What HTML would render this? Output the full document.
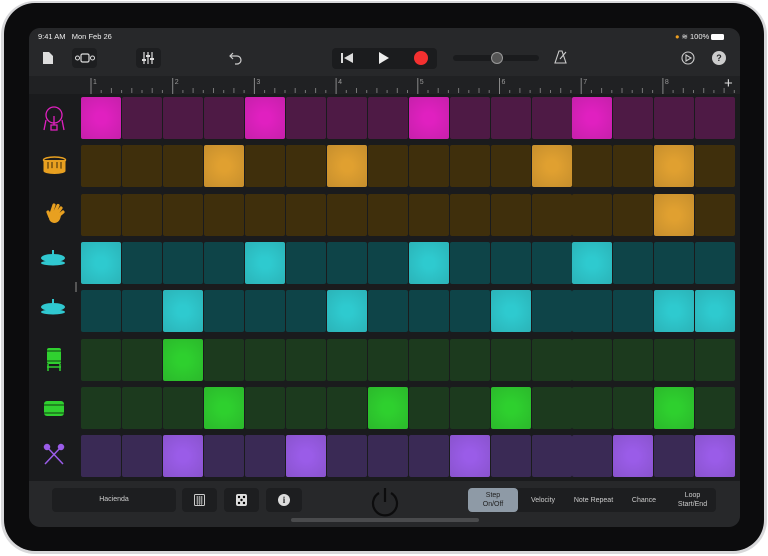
<!DOCTYPE html>
<html><head><style>
*{margin:0;padding:0;box-sizing:border-box}
body{width:768px;height:556px;background:#fff;position:relative;overflow:hidden;font-family:"Liberation Sans",sans-serif}
.outer{position:absolute;left:1px;top:1px;width:766px;height:553px;border-radius:34px;background:#d8d8da}
.bez{position:absolute;left:4px;top:3px;width:760px;height:548px;border-radius:31px;background:#0c0c0d}
.scr{position:absolute;left:29px;top:28px;width:711px;height:499px;border-radius:11px;background:#1a1b1d;overflow:hidden}
.tb{position:absolute;left:0;top:0;width:711px;height:48px;background:#27282a}
.st{position:absolute;top:4px;font-size:7.5px;color:#eee}
.rul{position:absolute;left:0;top:48px;width:711px;height:18px;background:#202123}
.left{position:absolute;left:0;top:66px;width:50px;height:387px;background:#1a1b1d}
.cell{position:absolute;width:40px;height:42px;border-radius:2px}
.bot{position:absolute;left:0;top:453px;width:711px;height:46px;background:#27282a}
.btn{position:absolute;background:#1d1e20;border-radius:4px;color:#ccc;font-size:7px;text-align:center}
.seg{position:absolute;top:7px;height:24px;font-size:7px;color:#ccc;text-align:center;display:flex;align-items:center;justify-content:center;line-height:9px}
.ico{position:absolute}
</style></head><body>
<div class="outer"></div><div class="bez"></div>
<div class="scr">
<div class="tb">
<div class="st" style="left:9px">9:41 AM&nbsp;&nbsp;&nbsp;Mon Feb 26</div>
<div class="st" style="left:646px"><span style="color:#f0a020">●</span> ≋ 100% <span style="display:inline-block;width:13px;height:6px;background:#fff;border-radius:1.5px;vertical-align:middle"></span></div>
<svg class="ico" style="left:13px;top:23px" width="12" height="14"><path d="M1 1h6l4 4v8H1z" fill="#ddd"/></svg>
<div class="btn" style="left:43px;top:20px;width:25px;height:20px"></div>
<svg class="ico" style="left:45px;top:25px" width="22" height="10"><rect x="7" y="1" width="8" height="8" rx="1.5" fill="none" stroke="#ddd" stroke-width="1.2"/><circle cx="3.5" cy="5" r="2" fill="none" stroke="#ddd"/><circle cx="18.5" cy="5" r="2" fill="none" stroke="#ddd"/></svg>
<div class="btn" style="left:107px;top:20px;width:25px;height:20px"></div>
<svg class="ico" style="left:113px;top:23px" width="14" height="14" stroke="#ddd" stroke-width="1.2"><path d="M2 1v12M6 1v12M10 1v12"/><path d="M0 9h4M4 5h4M8 8h4" stroke-width="2"/></svg>
<svg class="ico" style="left:200px;top:23px" width="14" height="14" fill="none" stroke="#ccc" stroke-width="1.2"><path d="M4 2L1 5l3 3M1 5h7a4 4 0 0 1 0 8H6"/></svg>
<div class="btn" style="left:303px;top:20px;width:105px;height:21px;background:#1b1c1e"></div>
<svg class="ico" style="left:311px;top:24px" width="14" height="12"><rect x="1" y="1" width="2" height="10" fill="#ddd"/><path d="M13 1v10L4 6z" fill="#ddd"/></svg>
<svg class="ico" style="left:349px;top:24px" width="12" height="12"><path d="M1 0v12l10-6z" fill="#eee"/></svg>
<div style="position:absolute;left:385px;top:23px;width:14px;height:14px;border-radius:7px;background:#f43030"></div>
<div style="position:absolute;left:424px;top:27px;width:86px;height:6px;border-radius:3px;background:#1a1b1d"></div>
<div style="position:absolute;left:462px;top:24px;width:12px;height:12px;border-radius:6px;background:#555;border:1px solid #999"></div>
<svg class="ico" style="left:525px;top:22px" width="14" height="15" fill="none" stroke="#ccc" stroke-width="1.1"><path d="M5 1h3l4 12H1zM1 13h11M6 9l6-7"/></svg>
<svg class="ico" style="left:652px;top:23px" width="14" height="14" fill="none" stroke="#ccc" stroke-width="1.1"><circle cx="7" cy="7" r="6"/><path d="M5 4v6l5-3z"/></svg>
<div style="position:absolute;left:683px;top:23px;width:14px;height:14px;border-radius:7px;background:#ccc;color:#27282a;font-size:9px;font-weight:bold;text-align:center;line-height:14px">?</div>
</div>
<div class="rul">
<svg width="711" height="18" style="position:absolute;left:0;top:0" id="rsv"></svg>
<div style="position:absolute;left:695px;top:-1px;color:#ddd;font-size:15px">+</div>
</div>
<div class="left"></div>
<div id="grid"></div>
<svg class="ico" style="left:13px;top:78px" width="24" height="26" fill="none" stroke="#e020c0" stroke-width="1.3"><circle cx="12" cy="9" r="8"/><path d="M12 10v9M9 19h6v5H9zM4 14l-2 10M20 14l2 10"/></svg>
<svg class="ico" style="left:13px;top:128px" width="25" height="19"><ellipse cx="12.5" cy="4" rx="11" ry="3" fill="none" stroke="#e8a020" stroke-width="1.5"/><rect x="1.5" y="4" width="22" height="11" fill="#e8a020"/><path d="M6 6v8M10 6v8M15 6v8M19 6v8" stroke="#3a2808" stroke-width="1"/><ellipse cx="12.5" cy="15" rx="11" ry="3" fill="#e8a020"/></svg>
<svg class="ico" style="left:15px;top:174px" width="22" height="22"><g stroke="#e8a020" stroke-width="3.2" stroke-linecap="round"><path d="M7 12L10 3M10 12L14 3.5M12 13L17 6M13 15L19 10"/><path d="M4 10L6 15"/></g><path d="M5 13Q4 20 10 21Q16 21 17 13L9 10Z" fill="#e8a020"/></svg>
<svg class="ico" style="left:11px;top:222px" width="26" height="16" fill="#30c8d0"><rect x="12" y="0" width="2" height="6"/><ellipse cx="13" cy="8" rx="12" ry="4"/><ellipse cx="13" cy="13" rx="12" ry="2.5"/></svg>
<svg class="ico" style="left:11px;top:271px" width="26" height="16" fill="#30c8d0"><rect x="12" y="0" width="2" height="6"/><ellipse cx="13" cy="8" rx="12" ry="4"/><ellipse cx="13" cy="13" rx="12" ry="2.5"/></svg>
<svg class="ico" style="left:17px;top:318px" width="16" height="26"><rect x="1" y="2" width="14" height="16" rx="2" fill="#30d030"/><path d="M2 18v7M14 18v7M1 21h14" stroke="#30d030" stroke-width="1.5"/><path d="M1 5h14M1 15h14" stroke="#124012"/></svg>
<svg class="ico" style="left:14px;top:371px" width="22" height="19"><rect x="1" y="2" width="20" height="15" rx="3" fill="#30d030"/><path d="M1 6h20M1 14h20" stroke="#124012"/></svg>
<svg class="ico" style="left:13px;top:415px" width="24" height="22" stroke="#9a5ce8" stroke-width="1.5"><path d="M3 21L19 4M21 21L5 4"/><circle cx="19" cy="4" r="2.5" fill="#9a5ce8"/><circle cx="5" cy="4" r="2.5" fill="#9a5ce8"/></svg>
<div style="position:absolute;left:46px;top:254px;width:1.5px;height:10px;background:#555"></div>
<div class="bot">
<div class="btn" style="left:23px;top:7px;width:124px;height:24px;line-height:24px">Hacienda</div>
<div class="btn" style="left:153px;top:7px;width:35px;height:24px"></div>
<svg class="ico" style="left:165px;top:13px" width="11" height="12"><rect x=".5" y=".5" width="10" height="11" rx="1" fill="none" stroke="#ccc"/><path d="M2 3h7M2 5h7M2 7h7M2 9h7M3.5 2v9M5.5 2v9M7.5 2v9" stroke="#ccc" stroke-width=".6"/></svg>
<div class="btn" style="left:195px;top:7px;width:35px;height:24px"></div>
<svg class="ico" style="left:207px;top:13px" width="11" height="12"><rect x="0" y="0" width="11" height="12" rx="2" fill="#ddd"/><circle cx="3" cy="3" r="1.2"/><circle cx="8" cy="3" r="1.2"/><circle cx="5.5" cy="6" r="1.2"/><circle cx="3" cy="9" r="1.2"/><circle cx="8" cy="9" r="1.2"/></svg>
<div class="btn" style="left:237px;top:7px;width:36px;height:24px"></div>
<div style="position:absolute;left:249px;top:13px;width:12px;height:12px;border-radius:6px;background:#ddd;color:#27282a;font-size:9px;font-weight:bold;text-align:center;line-height:12px;font-family:'Liberation Serif',serif">i</div>
<svg class="ico" style="left:340px;top:5px" width="32" height="32" fill="none" stroke="#0c0c0d" stroke-width="2.2"><path d="M10 7A12 12 0 1 0 22 7"/><path d="M16 2v14"/></svg>
<div style="position:absolute;left:439px;top:7px;width:248px;height:24px;background:#1d1e20;border-radius:4px"></div>
<div class="seg" style="left:439px;width:50px;background:#8e9aa6;color:#222;border-radius:4px">Step<br>On/Off</div>
<div class="seg" style="left:489px;width:50px">Velocity</div>
<div class="seg" style="left:539px;width:51px">Note Repeat</div>
<div class="seg" style="left:590px;width:50px">Chance</div>
<div class="seg" style="left:640px;width:47px">Loop<br>Start/End</div>
<div style="position:absolute;left:262px;top:37px;width:188px;height:4px;border-radius:2px;background:#4a4b4d"></div>
</div>
</div>
<script>
var rows=[["#4e1a45","#e020c0",[0,4,8,12]],["#3f2f0c","#e0a030",[3,6,11,14]],["#3f2f0c","#e0a030",[14]],["#0e4448","#2ecacf",[0,4,8,12]],["#0e4448","#2ecacf",[2,6,10,14,15]],["#1c3a1e","#2ed02e",[2]],["#1c3a1e","#2ed02e",[3,7,10,14]],["#3a2a55","#9a5ce8",[2,5,9,13,15]]];
var gs=[52,216,380,543],h="";
rows.forEach(function(r,i){var y=69+i*48.3;for(var c=0;c<16;c++){var x=gs[c>>2]+(c%4)*41;var on=r[2].indexOf(c)>=0;
h+='<div class="cell" style="left:'+x+'px;top:'+y+'px;background:'+(on?'radial-gradient(circle,'+r[1]+' 20%,'+r[1]+'dd 100%)':r[0])+'"></div>';}});
document.getElementById('grid').innerHTML=h;
var s="";for(var b=0;b<8;b++){var x=62+b*81.7;s+='<line x1="'+x+'" y1="2" x2="'+x+'" y2="18" stroke="#888"/><text x="'+(x+2)+'" y="8" font-size="7" fill="#999" font-family="Liberation Sans">'+(b+1)+'</text>';for(var t=1;t<8;t++){var tx=x+t*10.2;s+='<line x1="'+tx+'" y1="'+(t%2?14:12)+'" x2="'+tx+'" y2="17" stroke="#777"/>';}}
document.getElementById('rsv').innerHTML=s;
</script>
</body></html>
